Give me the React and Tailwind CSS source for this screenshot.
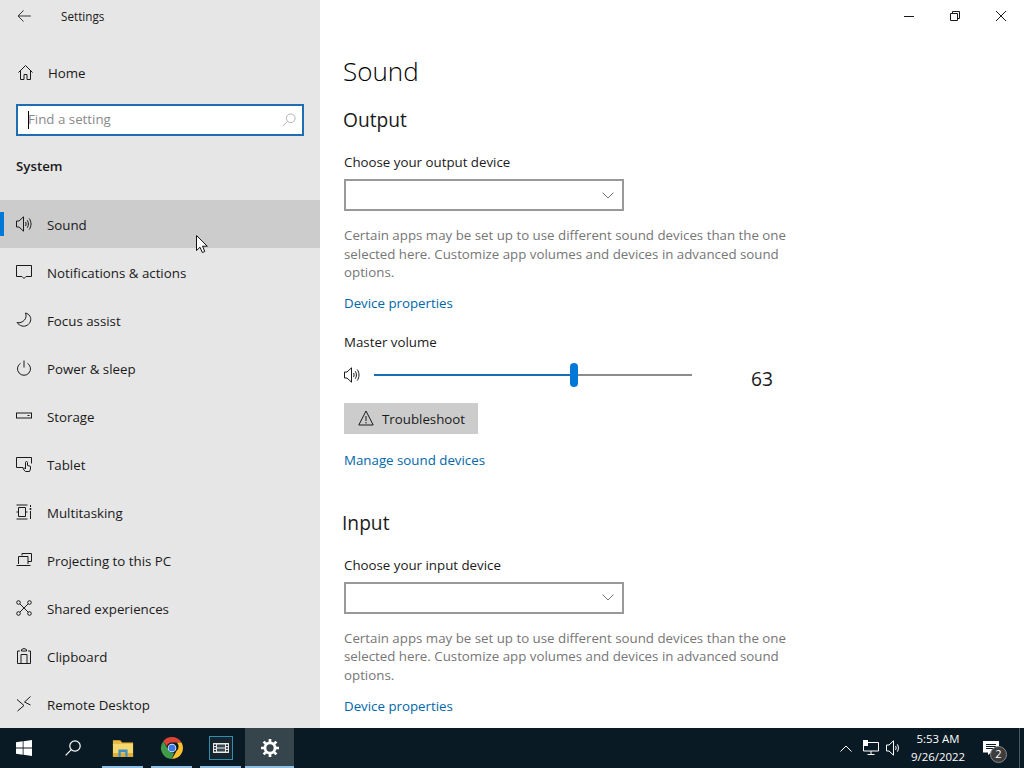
import React from "react";

const stroke = { fill: "none", stroke: "currentColor", strokeWidth: 1 };

// Icons for the settings nav, drawn on a 16x16 box
const icons = {
  home: <path d="M1.500 8.500 8.500 1.500l7 7M3.500 7v8.500h3.500v-5h3v5h3.500V7" {...stroke} />,
  sound: (
    <>
      <path d="M.5 5h2.500L7.500.8v14.400L3 11H.5z" {...stroke} />
      <path d="M9.500 6c.8 1.200.8 2.800 0 4M11.300 4.300c1.500 2.200 1.500 5.200 0 7.400M13.200 2.500c2.400 3.200 2.400 7.800 0 11" {...stroke} />
    </>
  ),
  notifications: <path d="M.5 1.500h15v11h-5.500L8 14.500 6 12.500H.5z" {...stroke} />,
  focus: <path d="M9.500 1c4 1 6 4.500 5 8-1 3.600-5 6-8.500 5-2-.5-4-2-5-3.500 2.500.8 5.500-.2 7.500-2.500 1.700-2 2-4.500 1-7z" {...stroke} />,
  power: (
    <>
      <path d="M8 .5v7" {...stroke} />
      <path d="M4.500 3.300a6.500 6.500 0 1 0 7 0" {...stroke} />
    </>
  ),
  storage: (
    <>
      <rect x=".5" y="5" width="15" height="5" {...stroke} />
      <path d="M11.500 7.500h2" {...stroke} />
    </>
  ),
  tablet: (
    <>
      <path d="M7 11.500H.5V1.500h15v6" {...stroke} />
      <path d="M9.500 15.500c-1-.8-2-2-2.500-3.200l1.500-.3 1 1V6.500a1 1 0 0 1 2 0v3l3 .8v2.700l-1 2.500z" fill="#e6e6e6" stroke="currentColor" />
    </>
  ),
  multitasking: (
    <>
      <path d="M.5 1h11M.5 15h11M2.500 3.500h7v9h-7zM.5 8h2M9.500 8h2" {...stroke} />
      <path d="M14.500 1v2M14.500 7v8" {...stroke} />
      <circle cx="14.500" cy="5" r="1" fill="currentColor" />
    </>
  ),
  projecting: (
    <>
      <path d="M6 3.500V1.500h9.500v8H12" {...stroke} />
      <path d="M2.500 12V4.500H12V12M.5 13.500h14" {...stroke} />
    </>
  ),
  shared: (
    <>
      <circle cx="2.500" cy="2.500" r="1.800" {...stroke} />
      <circle cx="13.500" cy="2.500" r="1.800" {...stroke} />
      <circle cx="2.500" cy="13.500" r="1.800" {...stroke} />
      <circle cx="13.500" cy="13.500" r="1.800" {...stroke} />
      <path d="m4 4 8 8M12 4l-8 8" {...stroke} />
    </>
  ),
  clipboard: (
    <>
      <path d="M4 3H1.500v12.500h13V3H12" {...stroke} />
      <path d="M5.500 3V1.500l2.500-1 2.500 1V3zM5 15.500v-9h6v9" {...stroke} />
    </>
  ),
  remote: <path d="M1 3.500 8 9.500 1.500 15M14.500.5 8.500 6l6 3" {...stroke} />,
};

const navItems = [
  ["sound", "Sound"],
  ["notifications", "Notifications & actions"],
  ["focus", "Focus assist"],
  ["power", "Power & sleep"],
  ["storage", "Storage"],
  ["tablet", "Tablet"],
  ["multitasking", "Multitasking"],
  ["projecting", "Projecting to this PC"],
  ["shared", "Shared experiences"],
  ["clipboard", "Clipboard"],
  ["remote", "Remote Desktop"],
];

function NavIcon({ name }) {
  return (
    <svg viewBox="0 0 16 16" className="w-4 h-4 shrink-0 overflow-visible">
      {icons[name]}
    </svg>
  );
}

function NavRow({ icon, label, active }) {
  return (
    <div className={`relative flex items-center h-12 pl-4 gap-[15px] text-[13.3px] text-[#1a1a1a] ${active ? "bg-[#cccccc]" : ""}`}>
      {active && <div className="absolute left-0 top-3 w-1 h-6 bg-[#0078d7]" />}
      <NavIcon name={icon} />
      <span className="pt-[3px]">{label}</span>
    </div>
  );
}

function Dropdown() {
  return (
    <div className="flex items-center justify-end w-[280px] h-8 border-2 border-[#999999] bg-white pr-[8px]">
      <svg viewBox="0 0 12 7" className="w-3 h-[7px] text-[#777777]">
        <path d="M.5.500 6 6l5.500-5.500" {...stroke} />
      </svg>
    </div>
  );
}

function HelpText() {
  return (
    <p className="w-[450px] mt-[15px] text-[13.3px] leading-[18.5px] text-[#767676]">
      Certain apps may be set up to use different sound devices than the one
      selected here. Customize app volumes and devices in advanced sound
      options.
    </p>
  );
}

function Chrome() {
  return (
    <svg viewBox="0 0 24 24" className="w-6 h-6">
      <path d="M12 1a11 11 0 0 1 9.500 5.500H12a5.500 5.500 0 0 0-5.200 3.700L3.300 5.200A11 11 0 0 1 12 1z" fill="#db4437" />
      <path d="M21.500 6.500A11 11 0 0 1 12 23l4.700-8.200a5.500 5.500 0 0 0 0-8.300z" fill="#fbc02d" />
      <path d="M12 23A11 11 0 0 1 3.300 5.200l4.600 8a5.500 5.500 0 0 0 6.200 3.300z" fill="#3f9b4a" />
      <circle cx="12" cy="12" r="4.300" fill="#ffffff" />
      <circle cx="12" cy="12" r="3.500" fill="#3b78e7" />
    </svg>
  );
}

function TaskItem({ children, active }) {
  return (
    <div className={`relative flex items-center justify-center w-[49px] h-10 ${active ? "bg-[#36444c]" : ""}`}>
      {children}
      <div className={`absolute bottom-0 h-0.5 bg-[#8fc0e4] ${active ? "inset-x-0" : "inset-x-1"}`} />
    </div>
  );
}

function Taskbar() {
  return (
    <div className="flex items-center h-10 bg-[#0a1a24] text-white">
      <div className="flex items-center justify-center w-12 h-10">
        <svg viewBox="0 0 16 16" className="w-4 h-4" fill="#ffffff">
          <path d="M0 2.300 6.700 1.300v6.300H0zM7.500 1.200 16 0v7.600H7.500zM0 8.400h6.700v6.300L0 13.700zM7.500 8.400H16V16l-8.500-1.200z" />
        </svg>
      </div>
      <div className="flex items-center justify-center w-[50px] h-10">
        <svg viewBox="0 0 16 16" className="w-4 h-4" fill="none" stroke="#ffffff" strokeWidth="1.200">
          <circle cx="10" cy="6" r="5.200" />
          <path d="M6.300 9.700.7 15.300" />
        </svg>
      </div>
      <TaskItem>
        <svg viewBox="0 0 24 20" className="w-[22px] h-[19px]">
          <path d="M1 1h8l2 2.500h12V6H1z" fill="#e8b93f" />
          <path d="M1 5h22v14H1z" fill="#f5d76e" />
          <path d="M1 15h22v4H1z" fill="#e0ad35" />
          <path d="M7 11h10v8h-2.500v-5h-5v5H7z" fill="#3f8fc4" />
        </svg>
      </TaskItem>
      <TaskItem>
        <Chrome />
      </TaskItem>
      <TaskItem>
        <div className="flex items-center justify-center w-6 h-6 border border-[#2f8fb0] bg-[#16262e]">
          {/* film strip with sprocket holes */}
          <svg viewBox="0 0 16 12" className="w-4 h-3">
            <path d="M0 1h16v10H0z" fill="#e8e8e8" />
            <path d="M4 2.500h8v3H4zM4 6.500h8v3H4z" fill="#3a4a52" />
            <path d="M1 2.500h2v1.500H1zM1 5.300h2v1.500H1zM1 8h2v1.500H1zM13 2.500h2v1.500h-2zM13 5.300h2v1.500h-2zM13 8h2v1.500h-2z" fill="#16262e" />
          </svg>
        </div>
      </TaskItem>
      <TaskItem active>
        <svg viewBox="0 0 16 16" className="w-[18px] h-[18px]">
          <circle cx="8" cy="8" r="4.500" fill="none" stroke="#ffffff" strokeWidth="2.500" />
          <path d="M8 0v3M8 13v3M0 8h3M13 8h3M2.300 2.300l2.200 2.200M11.500 11.500l2.200 2.200M13.700 2.300l-2.200 2.200M4.500 11.500l-2.200 2.200" stroke="#ffffff" strokeWidth="2.400" />
        </svg>
      </TaskItem>

      {/* tray */}
      <div className="flex items-center ml-auto h-10">
        <svg viewBox="0 0 12 7" className="w-3 h-[7px] mr-[11px]" fill="none" stroke="#ffffff">
          <path d="M.5 6.500 6 1l5.500 5.500" />
        </svg>
        <svg viewBox="0 0 16 16" className="w-4 h-4 mr-[7px]" fill="none" stroke="#ffffff">
          <path d="M5 2.500h10.500v8.500H.5V6M8 11v3.500M4.500 14.500h7" />
          <rect x=".5" y=".5" width="4" height="5" fill="#ffffff" />
        </svg>
        <svg viewBox="0 0 16 16" className="w-4 h-4" fill="none" stroke="#ffffff">
          <path d="M.5 5h2.500L7.500.8v14.400L3 11H.5z" />
          <path d="M9.500 6c.8 1.200.8 2.800 0 4M11.300 4.300c1.500 2.200 1.500 5.200 0 7.400" />
        </svg>
        <div className="w-[60px] ml-[6px] text-center text-[11.4px] leading-[18px] text-white">
          <div>5:53 AM</div>
          <div>9/26/2022</div>
        </div>
        <div className="relative w-12 h-10 ml-[3px] flex items-center justify-center">
          <svg viewBox="0 0 16 16" className="w-4 h-4 -translate-x-1" fill="#ffffff">
            <path d="M0 1h16v11.500H8L5 15v-2.500H0z" />
            <path d="M3 4.500h10M3 6.500h10M3 8.500h7" stroke="#0a1a24" />
          </svg>
          <div className="absolute left-[19px] top-[18px] flex items-center justify-center w-[17px] h-[17px] rounded-full bg-[#3c3c3c] border border-[#888888] text-[11px] text-white">
            2
          </div>
        </div>
        <div className="w-[5px] h-10 border-l border-[#4a5a62]" />
      </div>
    </div>
  );
}

export default function App() {
  return (
    <div className="relative flex flex-col w-[1024px] h-[768px] overflow-hidden bg-white font-['Open_Sans','Noto_Sans',sans-serif] text-[#1a1a1a]">
      <div className="flex h-[728px]">
        {/* Sidebar */}
        <div className="w-[320px] shrink-0 bg-[#e6e6e6] overflow-hidden">
          <div className="flex items-center h-8 pl-[17px] text-[#1a1a1a]">
            <svg viewBox="0 0 16 14" className="w-[14px] h-3 shrink-0" {...stroke}>
              <path d="M7.500.5 1 7l6.500 6.500M1 7h15" />
            </svg>
            <span className="ml-[30px] pt-[2px] text-[11.7px]">Settings</span>
          </div>
          <div className="flex items-center h-12 mt-4 pl-[17px] gap-[15px] text-[13.3px]">
            <NavIcon name="home" />
            <span className="pt-[3px]">Home</span>
          </div>
          <div className="flex items-center justify-between h-8 mx-4 mt-2 pl-[10px] pr-[6px] border-2 border-[#1f6fb0] bg-white">
            <div className="flex items-center text-[13.3px] text-[#8a8a8a]">
              <span className="w-px h-[18px] bg-black" />
              <span className="-ml-px">Find a setting</span>
            </div>
            <svg viewBox="0 0 16 16" className="w-[14px] h-[14px] text-[#aaaaaa]" {...stroke}>
              <circle cx="10" cy="6" r="5" />
              <path d="M6.500 9.500 1 15" />
            </svg>
          </div>
          <div className="h-16 pl-4 pt-[21px] text-[13.3px] font-semibold">System</div>
          {navItems.map(([icon, label]) => (
            <NavRow key={label} icon={icon} label={label} active={label === "Sound"} />
          ))}
        </div>

        {/* Content */}
        <div className="flex-1 min-w-0 overflow-hidden">
          <div className="flex justify-end h-8 text-[#1a1a1a]">
            <div className="flex items-center justify-center w-[46px] h-8">
              <svg viewBox="0 0 10 10" className="w-[10px] h-[10px]" {...stroke}>
                <path d="M0 5.500h10" />
              </svg>
            </div>
            <div className="flex items-center justify-center w-[46px] h-8">
              <svg viewBox="0 0 10 10" className="w-[10px] h-[10px]" {...stroke}>
                <path d="M.5 2.500h7v7h-7zM2.500 2.500v-2h7v7h-2" />
              </svg>
            </div>
            <div className="flex items-center justify-center w-[46px] h-8">
              <svg viewBox="0 0 10 10" className="w-[10px] h-[10px]" {...stroke}>
                <path d="m0 0 10 10M10 0 0 10" />
              </svg>
            </div>
          </div>

          <div className="pl-6">
            <h1 className="-ml-px mt-5 text-[26px] font-light leading-[38px] text-black">Sound</h1>
            <h2 className="-ml-px mt-4 text-[19.2px] leading-[27px]">Output</h2>
            <div className="mt-5 text-[13.3px] leading-[19px]">Choose your output device</div>
            <div className="mt-[7px]">
              <Dropdown />
            </div>
            <HelpText />
            <div className="mt-[12px] text-[13.3px] leading-[19px] text-[#0067a8]">Device properties</div>
            <div className="mt-5 text-[13.3px] leading-[19px]">Master volume</div>

            <div className="flex items-center h-6 mt-[11px]">
              <NavIcon name="sound" />
              <div className="relative w-[318px] h-0.5 ml-[14px] bg-[#8c8c8c]">
                <div className="absolute left-0 top-0 h-0.5 w-[200px] bg-[#1a6fb4]" />
                <div className="absolute left-[196px] -top-[11px] w-2 h-6 rounded-full bg-[#0078d7]" />
              </div>
              <span className="ml-[59px] mt-2 text-[19.2px] leading-[27px]">63</span>
            </div>

            <div className="flex items-center gap-2 w-[134px] h-[31px] mt-4 pl-[14px] bg-[#cccccc] text-[13.3px]">
              <svg viewBox="0 0 16 16" className="w-4 h-4" {...stroke}>
                <path d="M8 1 .8 15h14.400zM8 6v5M8 12v1.500" />
              </svg>
              <span className="pt-[3px]">Troubleshoot</span>
            </div>
            <div className="mt-[17px] text-[13.3px] leading-[19px] text-[#0067a8]">Manage sound devices</div>

            <h2 className="-ml-0.5 mt-[39px] text-[19.2px] leading-[27px]">Input</h2>
            <div className="mt-5 text-[13.3px] leading-[19px]">Choose your input device</div>
            <div className="mt-[7px]">
              <Dropdown />
            </div>
            <HelpText />
            <div className="mt-[13px] text-[13.3px] leading-[19px] text-[#0067a8]">Device properties</div>
          </div>
        </div>
      </div>

      <Taskbar />

      {/* mouse pointer */}
      <svg viewBox="0 0 12 19" className="absolute left-[196px] top-[235px] w-3 h-[19px]">
        <path d="M.5.500v15l3.500-3.300 2.300 5.300 2.500-1-2.300-5.300h4.800z" fill="#ffffff" stroke="#111111" />
      </svg>
    </div>
  );
}
